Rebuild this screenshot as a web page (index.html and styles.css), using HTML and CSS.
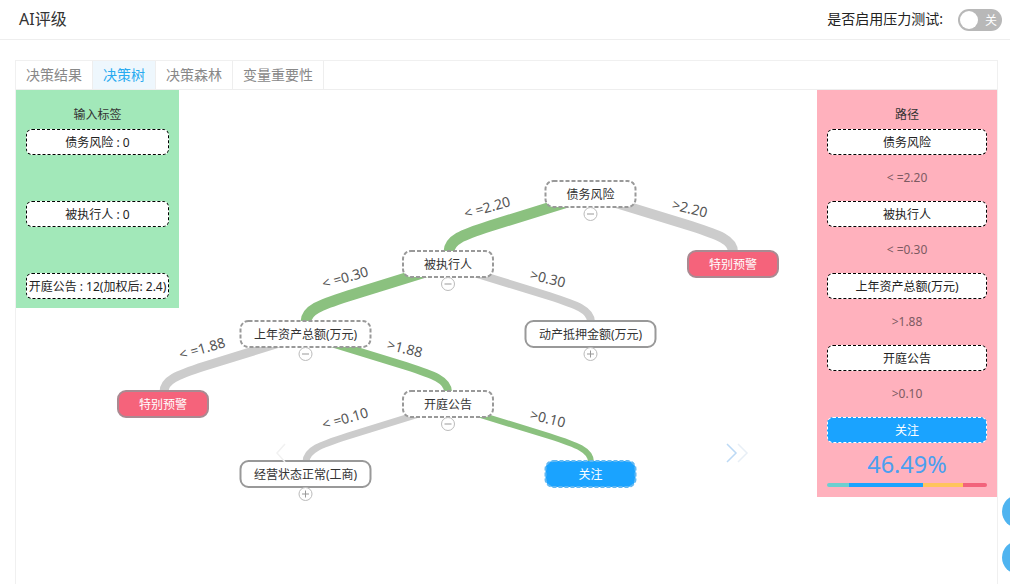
FILE: index.html
```html
<!DOCTYPE html>
<html lang="en">
<head>
  <meta charset="UTF-8">
  <meta name="viewport" content="width=device-width, initial-scale=1.0">
  <title>AI评级</title>
  <link rel="stylesheet" href="styles.css">
</head>
<body>

  <div class="header">
    <div class="header-title">AI评级</div>
    <div class="header-right">
      <span class="header-label">是否启用压力测试:</span>
      <div class="switch">
        <span class="switch-knob"></span>
        <span class="switch-text">关</span>
      </div>
    </div>
  </div>

  <div class="card">
    <div class="tabs">
      <div class="tab">决策结果</div>
      <div class="tab active">决策树</div>
      <div class="tab">决策森林</div>
      <div class="tab">变量重要性</div>
    </div>

    <div class="tab-body">
      <div class="panel panel-input">
        <div class="panel-title">输入标签</div>
        <div class="panel-node">债务风险 : 0</div>
        <div class="panel-gap"></div>
        <div class="panel-node">被执行人 : 0</div>
        <div class="panel-gap"></div>
        <div class="panel-node">开庭公告 : 12(加权后: 2.4)</div>
      </div>

      <div class="canvas">
        <svg class="tree" width="638" height="494" viewBox="179 90 638 494">
          <!-- links, drawn under the nodes -->
          <path class="link on w11" d="M590 195 L490 226 C462 235 449 240 449 252"/>
          <path class="link off w10" d="M590 195 L691 226 C719 235 733 240 733 252"/>
          <path class="link on w11" d="M448 265 L348 296 C320 305 306 310 306 322"/>
          <path class="link off w8" d="M448 265 L549 296 C577 305 591 310 591 322"/>
          <path class="link off w9" d="M305 335 L205 366 C177 375 164 380 164 392"/>
          <path class="link on w8" d="M305 335 L406 366 C434 375 448 380 448 392"/>
          <path class="link off w7" d="M448 405 L348 436 C320 445 306 450 306 462"/>
          <path class="link on w6" d="M448 405 L549 436 C577 445 591 450 591 462"/>

          <!-- link labels -->
          <text class="edge" transform="translate(487 207) rotate(-16)">&lt; =2.20</text>
          <text class="edge" transform="translate(690 208) rotate(14)">&gt;2.20</text>
          <text class="edge" transform="translate(345 277) rotate(-16)">&lt; =0.30</text>
          <text class="edge" transform="translate(548 278) rotate(14)">&gt;0.30</text>
          <text class="edge" transform="translate(202 348) rotate(-16)">&lt; =1.88</text>
          <text class="edge" transform="translate(405 348) rotate(14)">&gt;1.88</text>
          <text class="edge" transform="translate(345 418) rotate(-16)">&lt; =0.10</text>
          <text class="edge" transform="translate(548 418) rotate(14)">&gt;0.10</text>

          <!-- nodes -->
          <rect class="node" x="545.5" y="181" width="90" height="26" rx="8"/>
          <text class="node-text" x="590.5" y="194.5">债务风险</text>
          <rect class="node" x="403" y="251" width="90" height="26" rx="8"/>
          <text class="node-text" x="448" y="264.5">被执行人</text>
          <rect class="node" x="240.5" y="321" width="130" height="26" rx="8"/>
          <text class="node-text" x="305.5" y="334.5">上年资产总额(万元)</text>
          <rect class="node" x="403" y="391" width="90" height="26" rx="8"/>
          <text class="node-text" x="448" y="404.5">开庭公告</text>

          <rect class="node leaf" x="525.5" y="321" width="130" height="26" rx="8"/>
          <text class="node-text" x="590.5" y="334.5">动产抵押金额(万元)</text>
          <rect class="node leaf" x="240.5" y="461" width="130" height="26" rx="8"/>
          <text class="node-text" x="305.5" y="474.5">经营状态正常(工商)</text>

          <rect class="node warn" x="688" y="251" width="90" height="26" rx="8"/>
          <text class="node-text light" x="733" y="264.5">特别预警</text>
          <rect class="node warn" x="118" y="391" width="90" height="26" rx="8"/>
          <text class="node-text light" x="163" y="404.5">特别预警</text>
          <rect class="node focus" x="545.5" y="461" width="90" height="26" rx="8"/>
          <text class="node-text light" x="590.5" y="474.5">关注</text>

          <!-- collapse buttons -->
          <g class="toggle">
            <circle cx="590.5" cy="214" r="6.5"/><path d="M587 214h7"/>
            <circle cx="448" cy="284" r="6.5"/><path d="M444.5 284h7"/>
            <circle cx="305.5" cy="354" r="6.5"/><path d="M302 354h7"/>
            <circle cx="448" cy="424" r="6.5"/><path d="M444.5 424h7"/>
            <circle cx="590.5" cy="354" r="6.5"/><path d="M587 354h7M590.5 350.5v7"/>
            <circle cx="305.5" cy="494" r="6.5"/><path d="M302 494h7M305.5 490.5v7"/>
          </g>

          <!-- carousel arrows -->
          <path class="arrow faint" d="M285 444 L277 453 L285 462"/>
          <path class="arrow" d="M727 444 L736 453 L727 462"/>
          <path class="arrow fainter" d="M738 444 L747 453 L738 462"/>
        </svg>
      </div>

      <div class="panel panel-path">
        <div class="panel-title">路径</div>
        <div class="panel-node">债务风险</div>
        <div class="panel-gap">&lt; =2.20</div>
        <div class="panel-node">被执行人</div>
        <div class="panel-gap">&lt; =0.30</div>
        <div class="panel-node">上年资产总额(万元)</div>
        <div class="panel-gap">&gt;1.88</div>
        <div class="panel-node">开庭公告</div>
        <div class="panel-gap">&gt;0.10</div>
        <div class="panel-node focus-node">关注</div>
        <div class="percent">46.49%</div>
        <div class="risk-bar">
          <span class="seg seg-teal"></span>
          <span class="seg seg-blue"></span>
          <span class="seg seg-yellow"></span>
          <span class="seg seg-red"></span>
        </div>
      </div>
    </div>
  </div>

  <div class="float-btn float-one"></div>
  <div class="float-btn float-two"></div>

</body>
</html>
```

FILE: styles.css
```css
/* Page */
html, body {
  height: 100%;
  overflow: hidden;
}

body {
  margin: 0;
  font-family: "Noto Sans", "Noto Sans CJK SC", sans-serif;
  color: #333;
  background-color: #fff;
}

/* Top bar */
.header {
  height: 39px;
  border-bottom: 1px solid #eee;
  padding: 0 8px 0 19px;
  display: flex;
  justify-content: space-between;
  align-items: center;
}

.header-title {
  font-size: 16px;
  margin-bottom: 3px;
}

.header-right {
  display: flex;
  align-items: center;
  gap: 15px;
  font-size: 14px;
  color: #222;
}

.header-label {
  margin-bottom: 3px;
}

.switch {
  width: 44px;
  height: 22px;
  box-sizing: border-box;
  border-radius: 11px;
  background-color: #b8b8b8;
  padding: 2px;
  display: flex;
  justify-content: space-between;
  align-items: center;
}

.switch-knob {
  width: 18px;
  height: 18px;
  border-radius: 50%;
  background-color: #fff;
}

.switch-text {
  font-size: 12px;
  color: #fff;
  margin-right: 3px;
}

/* Tabs card */
.card {
  margin: 20px 12px 0 15px;
  height: 524px;
  border: 1px solid #f0f0f0;
  border-bottom: none;
  box-sizing: border-box;
}

.tabs {
  display: flex;
  height: 29px;
  box-sizing: border-box;
  border-bottom: 1px solid #eee;
}

.tab {
  padding: 0 10px;
  line-height: 28px;
  font-size: 14px;
  color: #888;
  border-right: 1px solid #eee;
}

.tab.active {
  color: #29abf0;
  background-color: #eef7fd;
}

.tab-body {
  display: flex;
  align-items: flex-start;
}

/* Side panels */
.panel {
  box-sizing: border-box;
  display: flex;
  flex-direction: column;
  padding: 16px 10px 10px;
  font-size: 12px;
  flex-shrink: 0;
}

.panel-input {
  width: 163px;
  background-color: #a2e8b9;
  padding-bottom: 9px;
}

.panel-path {
  width: 180px;
  background-color: #ffb1bd;
  padding-bottom: 10px;
}

.panel-title {
  height: 23px;
  line-height: 18px;
  text-align: center;
  color: #333;
}

.panel-node {
  height: 26px;
  line-height: 26px;
  box-sizing: border-box;
  border: 1px dashed #000;
  border-radius: 6px;
  background-color: #fff;
  text-align: center;
  white-space: nowrap;
  color: #222;
}

.panel-gap {
  height: 46px;
  line-height: 46px;
  text-align: center;
  color: #7d5a62;
}

.focus-node {
  background-color: #1aa3ff;
  border-color: #fff;
  color: #fff;
}

.percent {
  height: 40px;
  line-height: 42px;
  text-align: center;
  font-size: 23.5px;
  color: #4a9ff0;
}

.risk-bar {
  display: flex;
  height: 4px;
  border-radius: 2px;
  overflow: hidden;
}

.seg-teal { width: 22px; background-color: #6ccfd0; }
.seg-blue { width: 74px; background-color: #1aa3ff; }
.seg-yellow { width: 40px; background-color: #ffc45c; }
.seg-red { width: 24px; background-color: #f2637b; }

/* Tree */
.canvas {
  flex: 1;
  min-width: 0;
}

.tree {
  display: block;
  overflow: visible;
}

.link {
  fill: none;
}

.link.on { stroke: #8bc17f; }
.link.off { stroke: #cccccc; }
.link.w11 { stroke-width: 11px; }
.link.w10 { stroke-width: 10px; }
.link.w9 { stroke-width: 9px; }
.link.w8 { stroke-width: 8px; }
.link.w7 { stroke-width: 7px; }
.link.w6 { stroke-width: 6px; }

.edge {
  font-size: 14px;
  fill: #555;
  text-anchor: middle;
  dominant-baseline: central;
}

.node {
  fill: #fff;
  stroke: #999;
  stroke-width: 2px;
  stroke-dasharray: 4 2;
}

.node.leaf {
  stroke-dasharray: none;
}

.node.warn {
  fill: #f5637b;
  stroke: #a98a92;
  stroke-dasharray: none;
}

.node.focus {
  fill: #1aa3ff;
  stroke: #62b8f2;
}

.node-text {
  font-size: 12px;
  fill: #333;
  text-anchor: middle;
  dominant-baseline: central;
}

.node-text.light {
  fill: #fff;
}

.toggle circle {
  fill: #fff;
  stroke: #bbb;
}

.toggle path {
  fill: none;
  stroke: #999;
}

.arrow {
  fill: none;
  stroke: #bcd9f5;
  stroke-width: 1.5px;
}

.arrow.faint {
  stroke: #f1f1f1;
}

.arrow.fainter {
  stroke: #e8eff6;
}

/* Floating buttons on the right edge */
.float-btn {
  position: fixed;
  left: 1002px;
  width: 33px;
  height: 33px;
  border-radius: 50%;
  background-color: #4fb4f0;
}

.float-one { top: 495px; }
.float-two { top: 541px; }
```
